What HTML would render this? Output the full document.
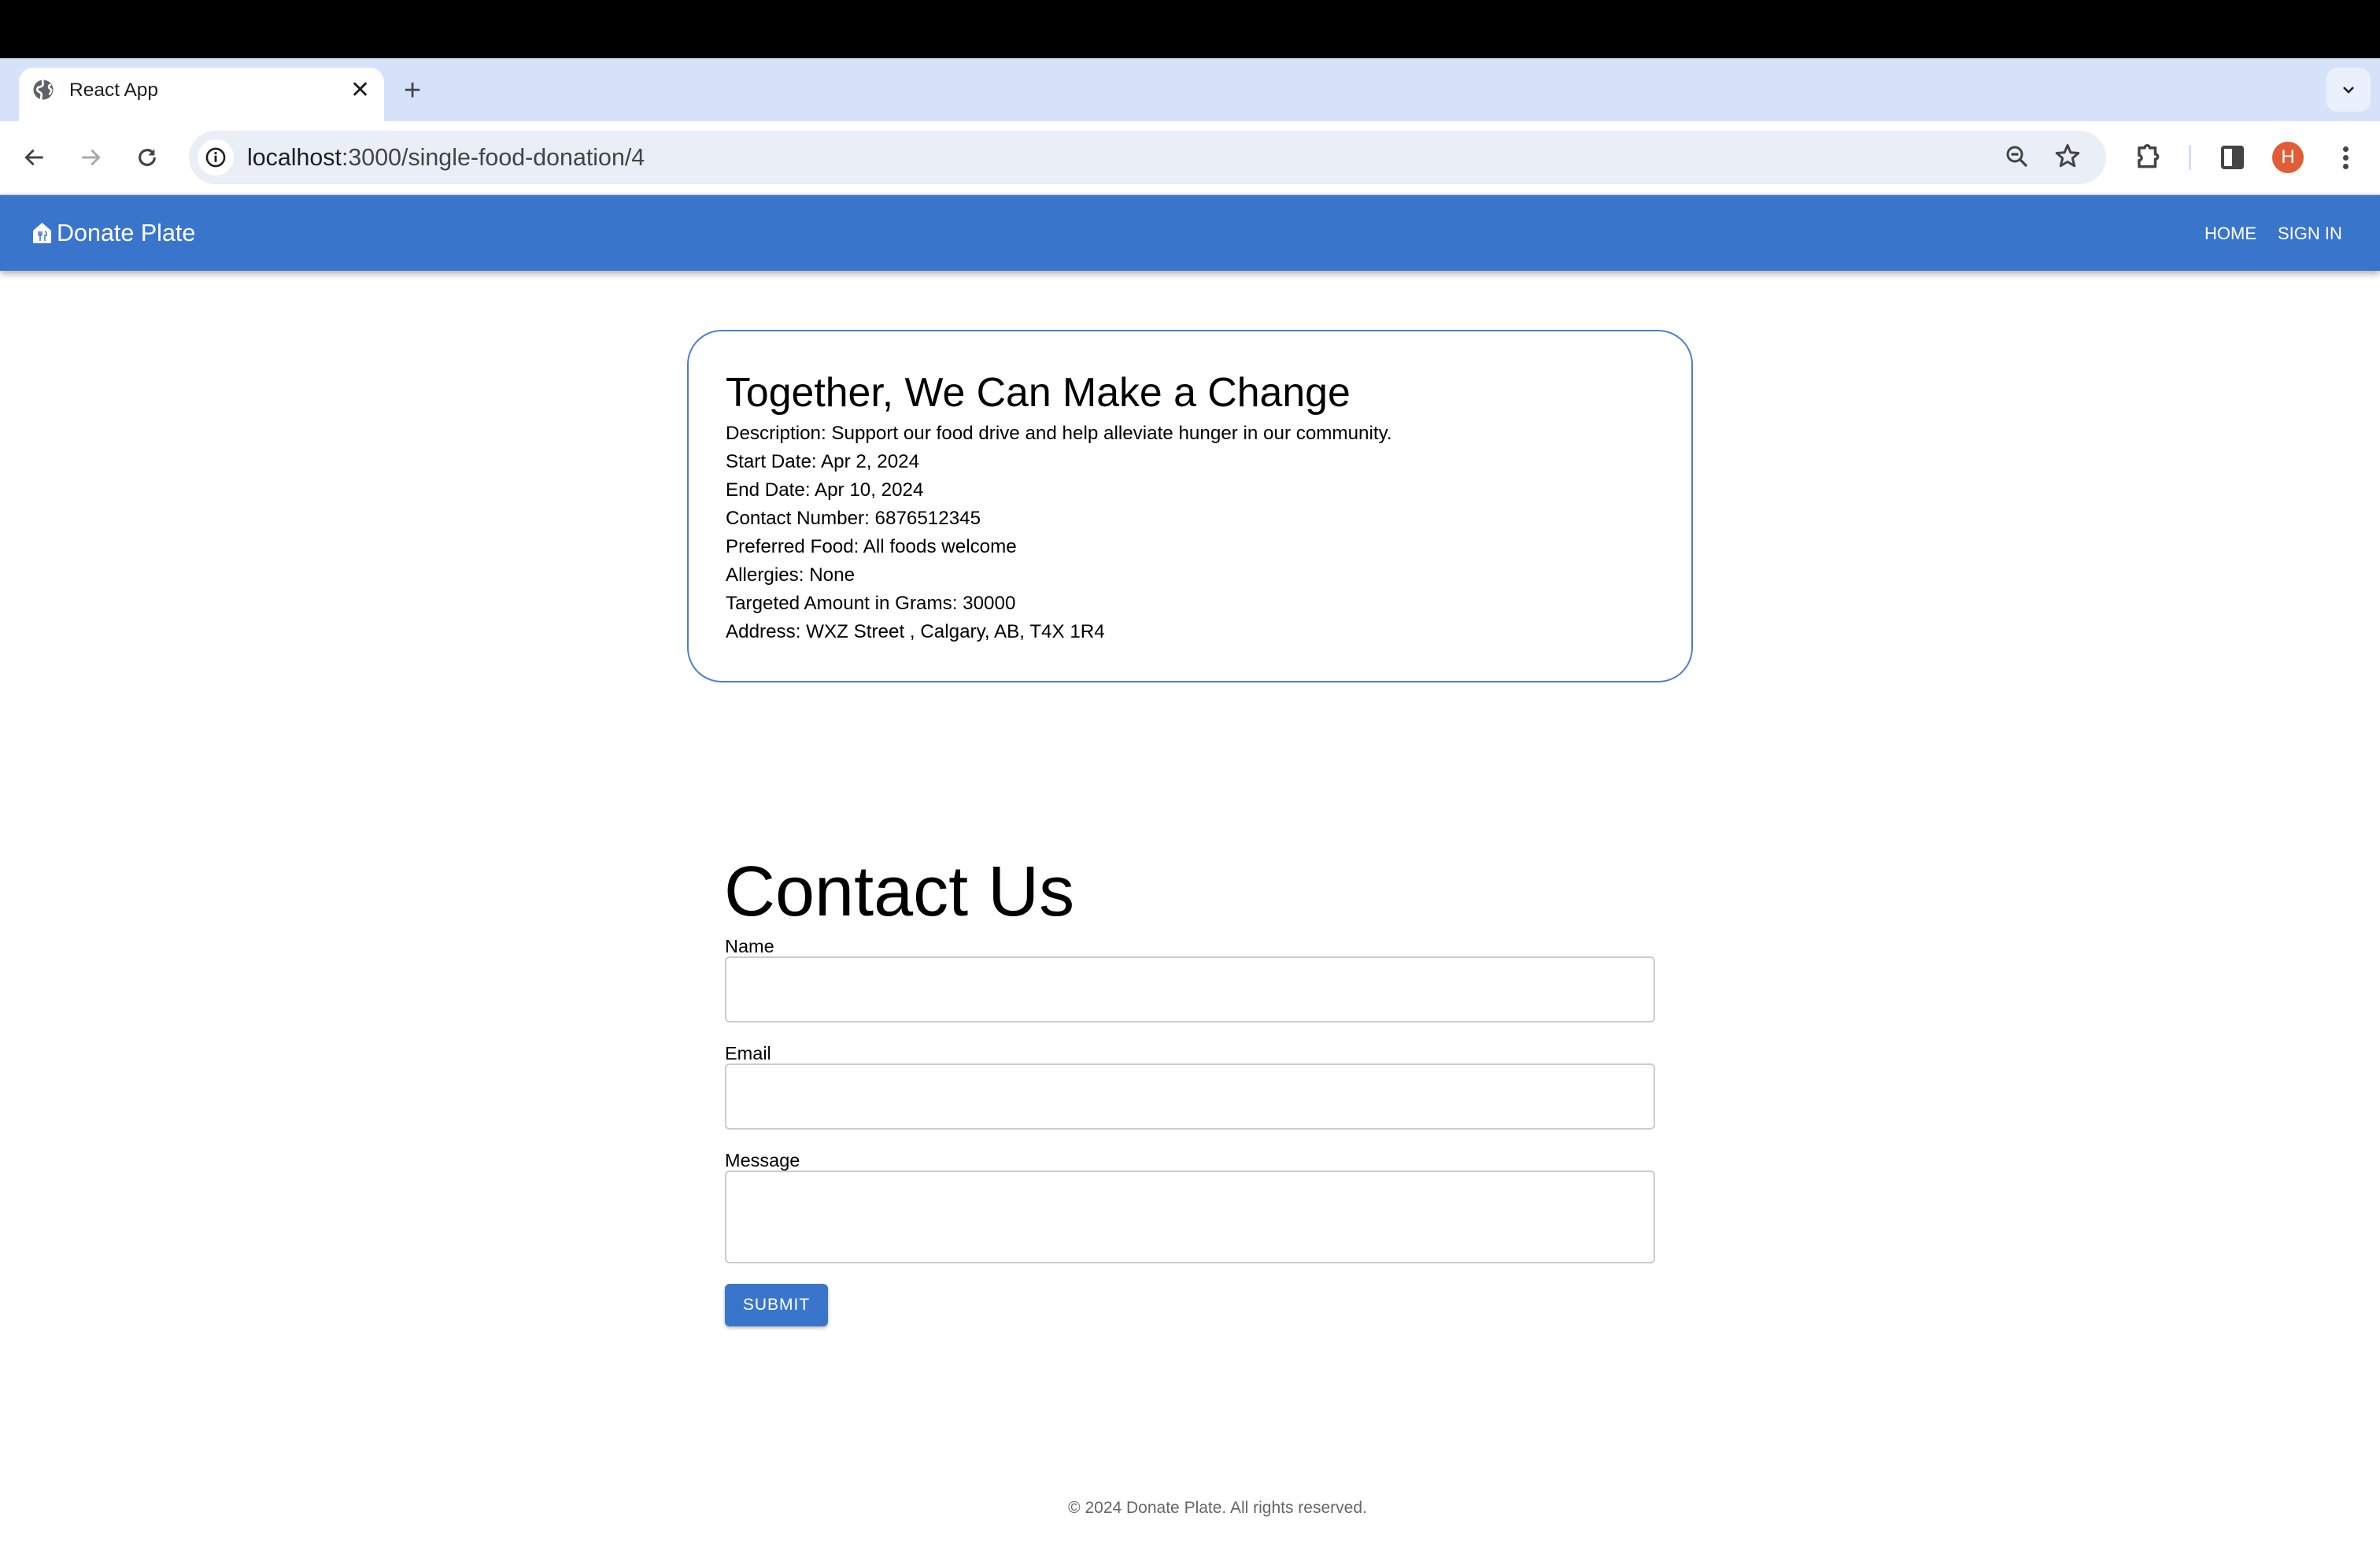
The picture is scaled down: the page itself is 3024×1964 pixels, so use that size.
<!DOCTYPE html>
<html><head><meta charset="utf-8"><style>
*{box-sizing:border-box;margin:0;padding:0}
body{width:3024px;height:1964px;background:#fff;font-family:"Liberation Sans",Arial,sans-serif;position:relative;overflow:hidden;color:#000}
.abs{position:absolute}
</style></head><body>
<div class="abs" style="left:0;top:0;width:3024px;height:74px;background:#000"></div>
<div class="abs" style="left:0;top:74px;width:3024px;height:80px;background:#d6e2fa"></div>
<div class="abs" style="left:24px;top:86px;width:464px;height:72px;background:#fff;border-radius:18px 18px 0 0"></div>
<svg class="abs" style="left:40px;top:99px" width="30" height="30" viewBox="0 0 24 24"><circle cx="12" cy="12" r="10" fill="#5f6368"/><path d="M12 2c-2 2 1 4 -1 6s-4 0-5 3 3 3 4 5-1 4 0 6" stroke="#fff" stroke-width="2.2" fill="none"/><path d="M20 7c-3 0-3 3-1 4s1 4 -1 6" stroke="#fff" stroke-width="2" fill="none"/></svg>
<div class="abs" style="left:88px;top:101px;font-size:24.5px;color:#1f1f1f">React App</div>
<div class="abs" style="left:445px;top:97px;font-size:30px;color:#1f1f1f">✕</div>
<div class="abs" style="left:513px;top:94px;font-size:38px;color:#444;font-weight:300">+</div>
<div class="abs" style="left:2956px;top:86px;width:56px;height:56px;border-radius:14px;background:#eaf0fc"></div>
<svg class="abs" style="left:2972px;top:102px" width="24" height="24" viewBox="0 0 24 24"><path d="M6 9l6 6 6-6" stroke="#1f1f1f" stroke-width="2.6" fill="none"/></svg>
<div class="abs" style="left:0;top:154px;width:3024px;height:92px;background:#fff"></div>
<div class="abs" style="left:0;top:246px;width:3024px;height:2px;background:#ddd"></div>
<svg class="abs" style="left:28px;top:184px" width="32" height="32" viewBox="0 0 24 24"><path d="M20 12H5M11 5l-7 7 7 7" stroke="#444" stroke-width="2.2" fill="none"/></svg>
<svg class="abs" style="left:99px;top:184px" width="32" height="32" viewBox="0 0 24 24"><path d="M4 12h15M13 5l7 7-7 7" stroke="#aaa" stroke-width="2.2" fill="none"/></svg>
<svg class="abs" style="left:171px;top:184px" width="32" height="32" viewBox="0 0 24 24"><path d="M19 12a7 7 0 1 1-2.2-5.1" stroke="#444" stroke-width="2.4" fill="none"/><path d="M19 4v6h-6z" fill="#444"/></svg>
<div class="abs" style="left:240px;top:166px;width:2436px;height:68px;border-radius:34px;background:#eaeef6"></div>
<div class="abs" style="left:251px;top:177px;width:46px;height:46px;border-radius:23px;background:#fff"></div>
<svg class="abs" style="left:260px;top:186px" width="28" height="28" viewBox="0 0 24 24"><circle cx="12" cy="12" r="9.5" stroke="#1f1f1f" stroke-width="2.2" fill="none"/><rect x="10.8" y="10" width="2.4" height="7" fill="#1f1f1f"/><circle cx="12" cy="7.3" r="1.4" fill="#1f1f1f"/></svg>
<div class="abs" style="left:314px;top:183px;font-size:30.4px;color:#1f1f1f">localhost<span style="color:#444">:3000/single-food-donation/4</span></div>
<svg class="abs" style="left:2545px;top:181px" width="36" height="36" viewBox="0 0 24 24"><circle cx="10" cy="10" r="6" stroke="#444" stroke-width="2" fill="none"/><path d="M14.5 14.5l5.5 5.5M7 10h6" stroke="#444" stroke-width="2.2"/></svg>
<svg class="abs" style="left:2609px;top:180px" width="36" height="36" viewBox="0 0 24 24"><path d="M12 3l2.6 6.2 6.6.5-5 4.3 1.6 6.5L12 17l-5.8 3.5 1.6-6.5-5-4.3 6.6-.5z" stroke="#444" stroke-width="2" fill="none" stroke-linejoin="round"/></svg>
<svg class="abs" style="left:2710px;top:180px" width="38" height="38" viewBox="0 0 24 24"><path d="M5 5h4.5a2 2 0 0 1 4 0H18v5a2 2 0 0 1 0 4v6H5v-5a2 2 0 0 0 0-4z" stroke="#444" stroke-width="2.2" fill="none" stroke-linejoin="round"/></svg>
<div class="abs" style="left:2781px;top:184px;width:3px;height:32px;background:#d3dff7;border-radius:2px"></div>
<div class="abs" style="left:2822px;top:185px;width:29px;height:30px;border:4px solid #444;border-radius:4px"></div>
<div class="abs" style="left:2836px;top:185px;width:15px;height:30px;background:#444;border-radius:0 4px 4px 0"></div>
<div class="abs" style="left:2887px;top:180px;width:40px;height:40px;border-radius:20px;background:#e05d38;color:#fff;font-size:24px;text-align:center;line-height:40px">H</div>
<div class="abs" style="left:2977px;top:186px;width:7px;height:7px;border-radius:4px;background:#444"></div>
<div class="abs" style="left:2977px;top:197px;width:7px;height:7px;border-radius:4px;background:#444"></div>
<div class="abs" style="left:2977px;top:208px;width:7px;height:7px;border-radius:4px;background:#444"></div>
<div class="abs" style="left:0;top:248px;width:3024px;height:96px;background:#3a75cc;box-shadow:0 4px 8px rgba(0,0,0,.3)"></div>
<svg class="abs" style="left:42px;top:283px" width="23" height="26" viewBox="0 0 23 26"><path d="M0 10L11.5 0 23 10v16H0z" fill="#fff"/><path d="M7 11v5M9 11v5M11 11v5M7 16h4M9 16v7M15 11c2 0 2 3 2 5h-2v7" stroke="#3a75cc" stroke-width="1.5" fill="none"/></svg>
<div class="abs" style="left:72px;top:279px;font-size:30.5px;color:#fff">Donate Plate</div>
<div class="abs" style="left:2801px;top:284px;font-size:22px;color:#fff">HOME</div>
<div class="abs" style="left:2894px;top:284px;font-size:22px;color:#fff">SIGN IN</div>

<div class="abs" style="left:873px;top:419px;width:1278px;height:448px;border:2px solid #4a7fd0;border-radius:44px"></div>
<div class="abs" style="left:922px;top:468px;font-size:51.8px;line-height:60px">Together, We Can Make a Change</div>
<div class="abs" style="left:922px;top:533px;font-size:24.2px;line-height:36px">
Description: Support our food drive and help alleviate hunger in our community.<br>
Start Date: Apr 2, 2024<br>End Date: Apr 10, 2024<br>Contact Number: 6876512345<br>Preferred Food: All foods welcome<br>Allergies: None<br>Targeted Amount in Grams: 30000<br>Address: WXZ Street , Calgary, AB, T4X 1R4</div>

<div class="abs" style="left:920px;top:1083px;font-size:90px;line-height:100px;font-weight:300">Contact Us</div>
<div class="abs" style="left:921px;top:1189px;font-size:23.5px">Name</div>
<div class="abs" style="left:921px;top:1215px;width:1182px;height:84px;border:2px solid #ccc;border-radius:6px"></div>
<div class="abs" style="left:921px;top:1325px;font-size:23.5px">Email</div>
<div class="abs" style="left:921px;top:1351px;width:1182px;height:84px;border:2px solid #ccc;border-radius:6px"></div>
<div class="abs" style="left:921px;top:1461px;font-size:23.5px">Message</div>
<div class="abs" style="left:921px;top:1487px;width:1182px;height:118px;border:2px solid #ccc;border-radius:6px"></div>
<div class="abs" style="left:921px;top:1631px;width:131px;height:54px;background:#3a75cc;border-radius:6px;box-shadow:0 2px 4px rgba(0,0,0,.3);color:#fff;font-size:21px;text-align:center;line-height:54px;letter-spacing:1px">SUBMIT</div>

<div class="abs" style="left:0;top:1904px;width:3094px;text-align:center;font-size:21px;color:#666">© 2024 Donate Plate. All rights reserved.</div>
</body></html>
